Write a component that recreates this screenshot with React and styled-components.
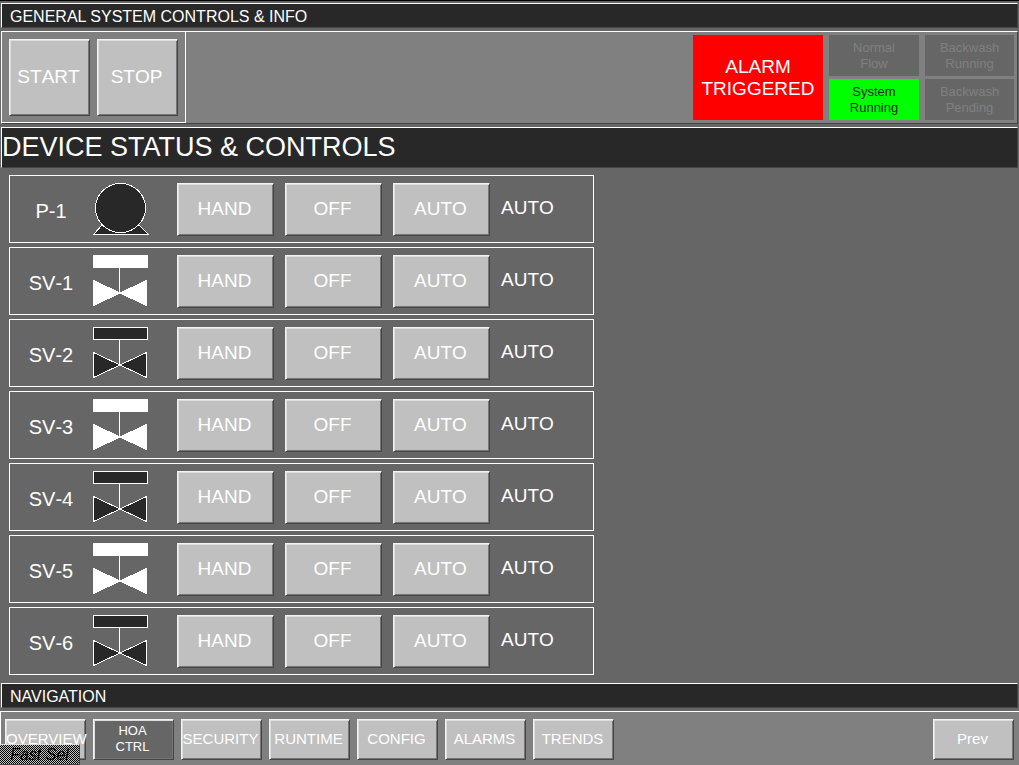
import React from "react";
import styled, { createGlobalStyle, css } from "styled-components";

const GlobalStyle = createGlobalStyle`
  *, *::before, *::after { box-sizing: border-box; }
  body {
    margin: 0;
    background: #666;
    color: #fff;
    font-family: "Liberation Sans", Arial, sans-serif;
  }
`;

const Screen = styled.div`
  display: flex;
  flex-direction: column;
  gap: 3px;
  min-height: 100vh;
  padding-top: 2px;
  border-top: 1px solid #000;
`;

const edges = css`
  border: 1px solid #444;
  border-top-color: #fff;
  border-left-color: #fff;
`;

const TitleBar = styled.h2`
  ${edges}
  margin: 0 1px;
  padding: 2px 8px 0;
  background: #282828;
  font-size: 16px;
  line-height: 21px;
  font-weight: 400;
`;

const PageTitle = styled.h1`
  ${edges}
  margin: 0 1px;
  background: #282828;
  font-size: 27px;
  line-height: 39px;
  font-weight: 400;
`;

const SystemPanel = styled.section`
  ${edges}
  display: flex;
  justify-content: space-between;
  margin: 0 1px;
  background: #808080;
`;

const PowerGroup = styled.div`
  display: flex;
  gap: 7px;
  padding: 7px 7px 6px;
  border-right: 1px solid #fff;
  border-bottom: 1px solid #fff;
`;

const Button = styled.button`
  width: ${(p) => p.$width}px;
  height: ${(p) => p.$height}px;
  padding: 0 2px 2px 0;
  border: 1px solid #444;
  border-top-color: #f4f4f4;
  border-left-color: #f4f4f4;
  box-shadow: inset 1px 1px #ddd, inset -1px -1px #777;
  background: ${(p) => (p.$active ? "#666" : "#c0c0c0")};
  color: #fff;
  font-family: inherit;
  font-size: ${(p) => p.$size}px;
  font-kerning: ${(p) => (p.$size > 16 ? "none" : "auto")};
  line-height: 16px;
  white-space: ${(p) => (p.$active ? "pre-line" : "nowrap")};
`;

const StatusGroup = styled.div`
  display: flex;
  gap: 6px;
  padding: 3px 3px 3px 0;
`;

const Alarm = styled.div`
  display: flex;
  align-items: center;
  justify-content: center;
  width: 130px;
  background: #f00;
  font-size: 19px;
  line-height: 22px;
  text-align: center;
`;

const StatusGrid = styled.div`
  display: grid;
  grid-template-columns: 90px 89px;
  grid-template-rows: 41px 41px;
  gap: 3px 6px;
`;

const Status = styled.div`
  display: flex;
  align-items: center;
  justify-content: center;
  background: ${(p) => (p.$on ? "#0f0" : "#666")};
  color: ${(p) => (p.$on ? "#282828" : "#808080")};
  font-size: 13px;
  line-height: 16px;
  text-align: center;
  white-space: pre-line;
`;

const DeviceList = styled.main`
  display: flex;
  flex: 1;
  flex-direction: column;
  gap: 4px;
  padding: 4px 9px 5px;
`;

const DeviceRow = styled.section`
  display: flex;
  width: 585px;
  height: 68px;
  padding: 7px 6px;
  border: 1px solid #fff;
`;

const DeviceName = styled.h3`
  width: 70px;
  margin: 0;
  font-size: 20px;
  font-kerning: none;
  line-height: 56px;
  font-weight: 400;
  text-align: center;
`;

const Symbol = styled.svg`
  width: 58px;
  height: 54px;
  margin: 0 27px 0 6px;
`;

const ModeButtons = styled.div`
  display: flex;
  gap: 11px;
`;

const Mode = styled.output`
  margin-left: 11px;
  font-size: 19px;
  font-kerning: none;
  line-height: 50px;
`;

const NavPanel = styled.nav`
  display: flex;
  gap: 7px;
  padding: 7px 5px 5px 4px;
  border-top: 1px solid #fff;
  border-left: 1px solid #fff;
  background: #808080;
`;

const Spacer = styled.div`
  flex: 1;
`;

const FastSelect = styled.div`
  position: fixed;
  left: 0;
  bottom: 0;
  width: 80px;
  height: 21px;
  border-top: 1px solid #ddd;
  border-right: 1px solid #444;
  border-bottom: 1px solid #444;
  background: repeating-conic-gradient(#000 0 25%, #c0c0c0 0 50%) 0 0 / 2px 2px;
  color: #000;
  font-size: 16px;
  line-height: 19px;
  font-style: italic;
  text-align: center;
`;

const STATUSES = [
  { text: "Normal\nFlow", on: false },
  { text: "Backwash\nRunning", on: false },
  { text: "System\nRunning", on: true },
  { text: "Backwash\nPending", on: false },
];

const DEVICES = [
  { name: "P-1", kind: "pump", on: false },
  { name: "SV-1", kind: "valve", on: true },
  { name: "SV-2", kind: "valve", on: false },
  { name: "SV-3", kind: "valve", on: true },
  { name: "SV-4", kind: "valve", on: false },
  { name: "SV-5", kind: "valve", on: true },
  { name: "SV-6", kind: "valve", on: false },
];

const PAGES = ["OVERVIEW", "HOA\nCTRL", "SECURITY", "RUNTIME", "CONFIG", "ALARMS", "TRENDS"];

function DeviceSymbol({ kind, on }) {
  const fill = on ? "#fff" : "#282828";
  return (
    <Symbol viewBox="0 0 58 54" fill={fill} stroke="#fff" shapeRendering="crispEdges" aria-hidden="true">
      {kind === "pump" ? (
        <>
          <path d="M10.5 41.5 1.5 51.5H56.5L46.5 41.5" />
          <ellipse cx="28.5" cy="25" rx="25" ry="24.5" />
        </>
      ) : (
        <>
          <rect x="1.5" y="0.5" width="54" height="12" />
          <path d="M27.5 12.5V38" />
          <path d="M1.5 25.5V50.5L28 38ZM54.5 25.5V50.5L28 38Z" />
        </>
      )}
    </Symbol>
  );
}

export default function App() {
  return (
    <>
      <GlobalStyle />
      <Screen>
        <TitleBar>GENERAL SYSTEM CONTROLS &amp; INFO</TitleBar>
        <SystemPanel>
          <PowerGroup>
            <Button $width={81} $height={77} $size={19}>START</Button>
            <Button $width={81} $height={77} $size={19}>STOP</Button>
          </PowerGroup>
          <StatusGroup>
            <Alarm>ALARM<br />TRIGGERED</Alarm>
            <StatusGrid>
              {STATUSES.map((s) => (
                <Status key={s.text} $on={s.on}>{s.text}</Status>
              ))}
            </StatusGrid>
          </StatusGroup>
        </SystemPanel>
        <PageTitle>DEVICE STATUS &amp; CONTROLS</PageTitle>
        <DeviceList>
          {DEVICES.map((d) => (
            <DeviceRow key={d.name}>
              <DeviceName>{d.name}</DeviceName>
              <DeviceSymbol kind={d.kind} on={d.on} />
              <ModeButtons>
                {["HAND", "OFF", "AUTO"].map((m) => (
                  <Button key={m} $width={97} $height={53} $size={19}>{m}</Button>
                ))}
              </ModeButtons>
              <Mode>AUTO</Mode>
            </DeviceRow>
          ))}
        </DeviceList>
        <TitleBar>NAVIGATION</TitleBar>
        <NavPanel>
          {PAGES.map((p) => {
            const active = p.startsWith("HOA");
            return (
              <Button key={p} $width={81} $height={41} $size={active ? 13 : 15} $active={active}>{p}</Button>
            );
          })}
          <Spacer />
          <Button $width={81} $height={41} $size={15}>Prev</Button>
        </NavPanel>
      </Screen>
      <FastSelect>Fast Sel</FastSelect>
    </>
  );
}
